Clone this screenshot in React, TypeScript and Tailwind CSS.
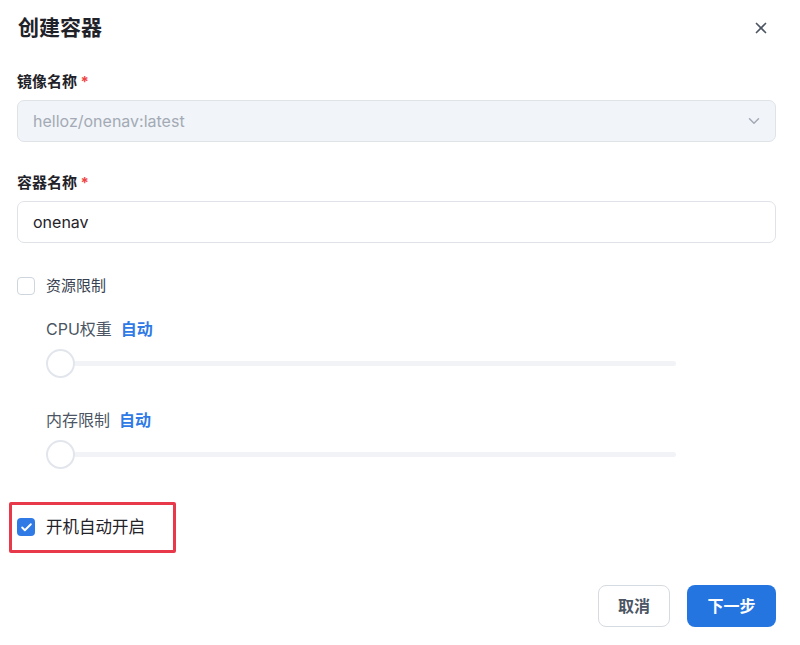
import { Check, ChevronDown, X } from "lucide-react";

const font = { fontFamily: '"Inter", "Noto Sans CJK SC", sans-serif' };

function Slider() {
  return (
    <div className="flex h-[30px] w-[630px] items-center">
      <div className="h-[29px] w-[29px] shrink-0 rounded-full border-2 border-[#e2e6ec] bg-white" />
      <div className="h-[5px] flex-1 rounded-r-full bg-[#f1f3f6]" />
    </div>
  );
}

export default function App() {
  return (
    <div className="h-[645px] w-[800px] bg-white text-[#1f2329]" style={font}>
      <div className="flex items-center justify-between pl-[18px] pr-[30px] pt-[14px]">
        <h1 className="text-[21px] font-bold leading-[28px] text-[#1f2329]">创建容器</h1>
        <X className="h-[18px] w-[18px] text-[#4b5563]" strokeWidth={2.2} />
      </div>

      <div className="px-[17px] pr-[24px]">
        {/* 镜像名称 */}
        <div className="mt-[29px] text-[15px] font-bold leading-[22px]">
          镜像名称 <span className="text-[#ef4444]">*</span>
        </div>
        <div className="mt-[7px] flex h-[42px] items-center justify-between rounded-[7px] border border-[#dfe3e8] bg-[#f1f4f8] pl-[15px] pr-[12px]">
          <span className="text-[16px] text-[#a3aab5]">helloz/onenav:latest</span>
          <ChevronDown className="h-[18px] w-[18px] text-[#a3aab5]" strokeWidth={2} />
        </div>

        {/* 容器名称 */}
        <div className="mt-[30px] text-[15px] font-bold leading-[22px]">
          容器名称 <span className="text-[#ef4444]">*</span>
        </div>
        <div className="mt-[7px] flex h-[42px] items-center rounded-[7px] border border-[#dfe3e8] bg-white pl-[15px]">
          <span className="text-[16px] text-[#1f2329]">onenav</span>
        </div>

        {/* 资源限制 */}
        <div className="mt-[32px] flex items-center gap-[11px]">
          <div className="h-[18px] w-[18px] rounded-[4px] border border-[#cfd5dc] bg-white" />
          <span className="text-[15px] text-[#374151]">资源限制</span>
        </div>

        <div className="pl-[29px]">
          <div className="mt-[20px] text-[16px] leading-[22px] text-[#4b5563]">
            CPU权重<span className="ml-[9px] font-bold text-[#2f7ae5]">自动</span>
          </div>
          <div className="mt-[9px]">
            <Slider />
          </div>
          <div className="mt-[30px] text-[16px] leading-[22px] text-[#4b5563]">
            内存限制<span className="ml-[9px] font-bold text-[#2f7ae5]">自动</span>
          </div>
          <div className="mt-[9px]">
            <Slider />
          </div>
        </div>

        {/* 开机自动开启 */}
        <div className="-ml-[8px] mt-[32px] flex h-[51px] w-[167px] items-center gap-[11px] rounded-[2px] border-[3px] border-[#e8394b] pl-[5px]">
          <div className="flex h-[18px] w-[18px] items-center justify-center rounded-[4px] bg-[#2f7ae5]">
            <Check className="h-[13px] w-[13px] text-white" strokeWidth={3.5} />
          </div>
          <span className="text-[16.5px] text-[#1f2329]">开机自动开启</span>
        </div>

        {/* footer */}
        <div className="mt-[32px] flex justify-end gap-[17px]">
          <button className="h-[42px] w-[72px] rounded-[8px] border border-[#d6dbe1] bg-white text-[16px] font-bold text-[#4b5563]">
            取消
          </button>
          <button className="h-[42px] w-[89px] rounded-[8px] bg-[#2475e0] text-[16px] font-bold text-white">
            下一步
          </button>
        </div>
      </div>
    </div>
  );
}
